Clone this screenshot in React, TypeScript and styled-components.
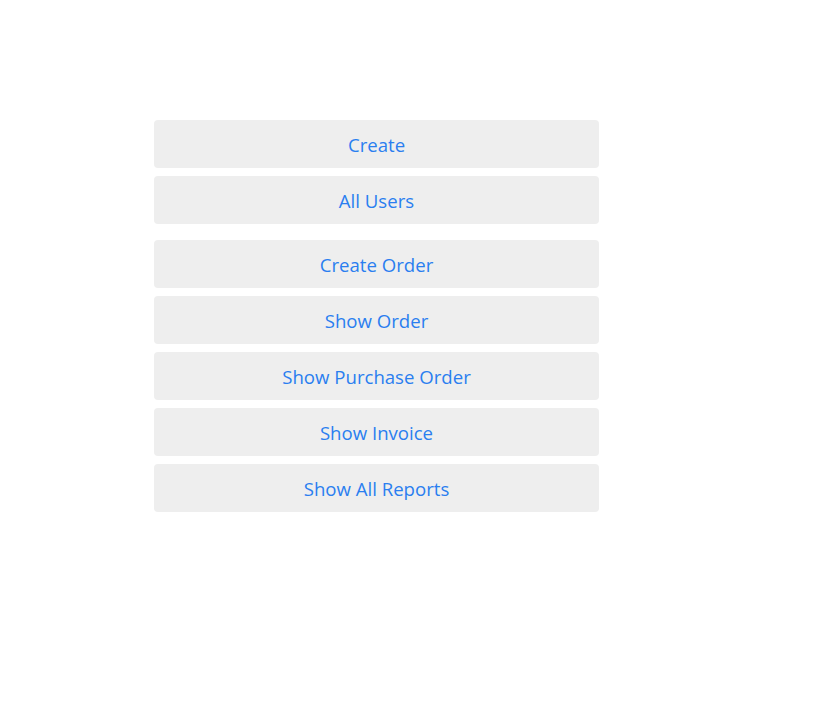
import React from "react";
import styled, { createGlobalStyle } from "styled-components";

const GlobalStyle = createGlobalStyle`
  body {
    margin: 0;
    background: #ffffff;
    font-family: "Open Sans", "Noto Sans", sans-serif;
  }
`;

const Page = styled.main`
  padding: 120px 0 0 154px;
  display: flex;
  flex-direction: column;
  gap: 16px;
`;

const Group = styled.nav`
  width: 445px;
  display: flex;
  flex-direction: column;
  gap: 8px;
`;

const MenuButton = styled.button`
  height: 48px;
  width: 100%;
  border: none;
  border-radius: 4px;
  padding: 1px 0 0;
  background-color: #eeeeee;
  color: #2a7ef0;
  font-family: "Open Sans", "Noto Sans", sans-serif;
  font-size: 18.6px;
  cursor: pointer;
`;

const accountLinks = ["Create", "All Users"];
const orderLinks = [
  "Create Order",
  "Show Order",
  "Show Purchase Order",
  "Show Invoice",
  "Show All Reports",
];

const App: React.FC = () => {
  return (
    <>
      <GlobalStyle />
      <Page>
        <Group>
          {accountLinks.map((label) => (
            <MenuButton key={label}>{label}</MenuButton>
          ))}
        </Group>
        <Group>
          {orderLinks.map((label) => (
            <MenuButton key={label}>{label}</MenuButton>
          ))}
        </Group>
      </Page>
    </>
  );
};

export default App;
